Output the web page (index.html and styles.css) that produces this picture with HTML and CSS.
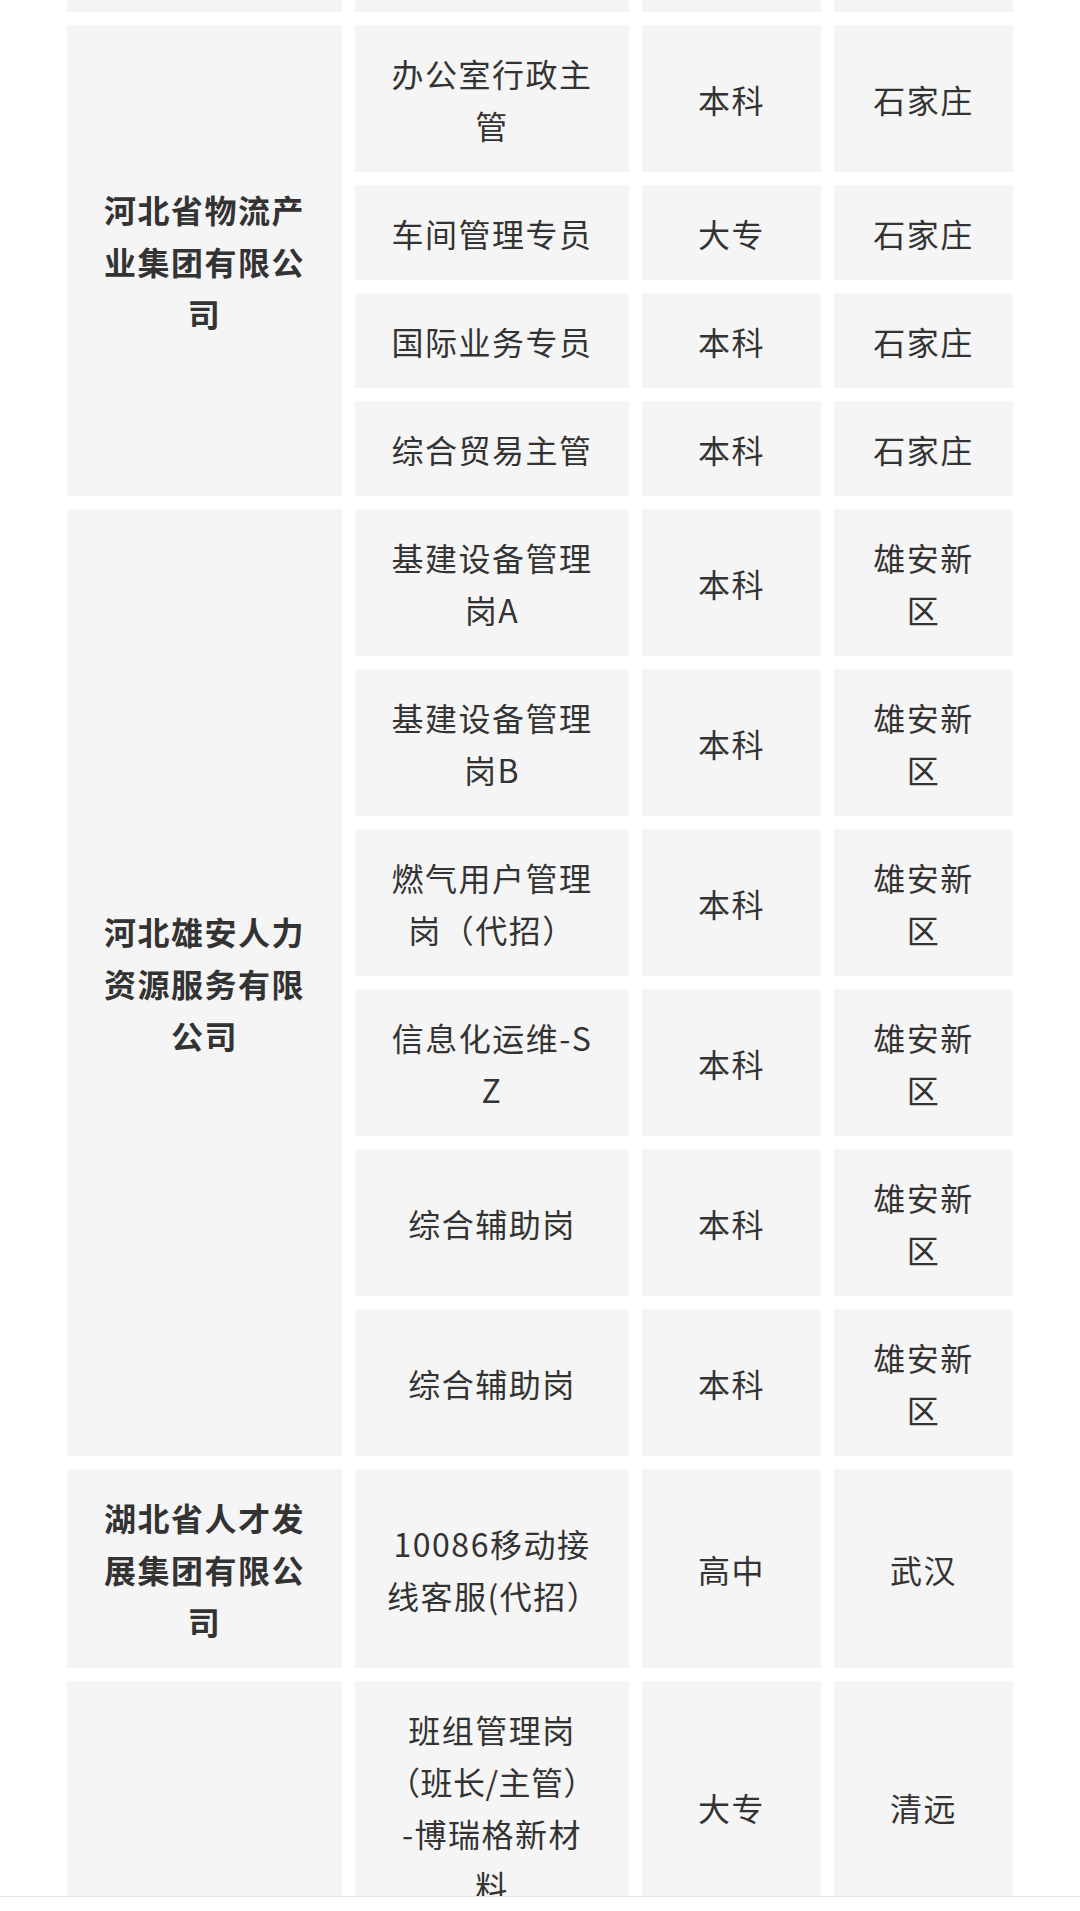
FILE: index.html
```html
<!DOCTYPE html>
<html lang="zh-CN">
<head>
<meta charset="utf-8">
<title>岗位表</title>
<link rel="stylesheet" href="styles.css">
</head>
<body>
<div class="page">
  <div class="sheet">
    <div class="cell stub"></div>
    <div class="cell stub"></div>
    <div class="cell stub"></div>
    <div class="cell stub"></div>

    <div class="cell company span4">河北省物流产业集团有限公司</div>
    <div class="cell">办公室行政主管</div><div class="cell">本科</div><div class="cell">石家庄</div>
    <div class="cell">车间管理专员</div><div class="cell">大专</div><div class="cell">石家庄</div>
    <div class="cell">国际业务专员</div><div class="cell">本科</div><div class="cell">石家庄</div>
    <div class="cell">综合贸易主管</div><div class="cell">本科</div><div class="cell">石家庄</div>

    <div class="cell company span6">河北雄安人力资源服务有限公司</div>
    <div class="cell">基建设备管理岗A</div><div class="cell">本科</div><div class="cell">雄安新区</div>
    <div class="cell">基建设备管理岗B</div><div class="cell">本科</div><div class="cell">雄安新区</div>
    <div class="cell">燃气用户管理岗（代招）</div><div class="cell">本科</div><div class="cell">雄安新区</div>
    <div class="cell">信息化运维-SZ</div><div class="cell">本科</div><div class="cell">雄安新区</div>
    <div class="cell">综合辅助岗</div><div class="cell">本科</div><div class="cell">雄安新区</div>
    <div class="cell">综合辅助岗</div><div class="cell">本科</div><div class="cell">雄安新区</div>

    <div class="cell company">湖北省人才发展集团有限公司</div>
    <div class="cell">10086移动接线客服(代招）</div><div class="cell">高中</div><div class="cell">武汉</div>

    <div class="cell company"></div>
    <div class="cell"><p class="cell-text">班组管理岗<span class="keep">（班长/主管）</span>&#8203;-博瑞格新材料</p></div><div class="cell">大专</div><div class="cell">清远</div>
  </div>
</div>
<div class="bottom-bar"></div>
</body>
</html>
```

FILE: styles.css
```css
html, body {
  margin: 0;
  padding: 0;
  background: #ffffff;
}

.page {
  padding: 0 67px;
}

.sheet {
  display: grid;
  grid-template-columns: 275px 274px 179px 179px;
  gap: 13px;
  font-family: "Noto Sans CJK SC", "Noto Sans", sans-serif;
  font-size: 32px;
  letter-spacing: 1.5px;
  line-height: 52px;
  color: #333333;
}

.cell {
  background: #f5f5f5;
  padding: 21.5px 32px;
  display: flex;
  align-items: center;
  justify-content: center;
  text-align: center;
  word-break: break-all;
}

.cell-text {
  margin: 0;
}

.keep {
  white-space: nowrap;
  letter-spacing: 0.5px;
}

.cell.stub {
  height: 12px;
  padding: 0;
}

.company {
  grid-column: 1;
  font-weight: bold;
}

.span4 {
  grid-row: span 4;
}

.span6 {
  grid-row: span 6;
}

.bottom-bar {
  position: fixed;
  left: 0;
  right: 0;
  bottom: 0;
  height: 14px;
  background: #ffffff;
  border-top: 1px solid #e2e2e2;
}
```
